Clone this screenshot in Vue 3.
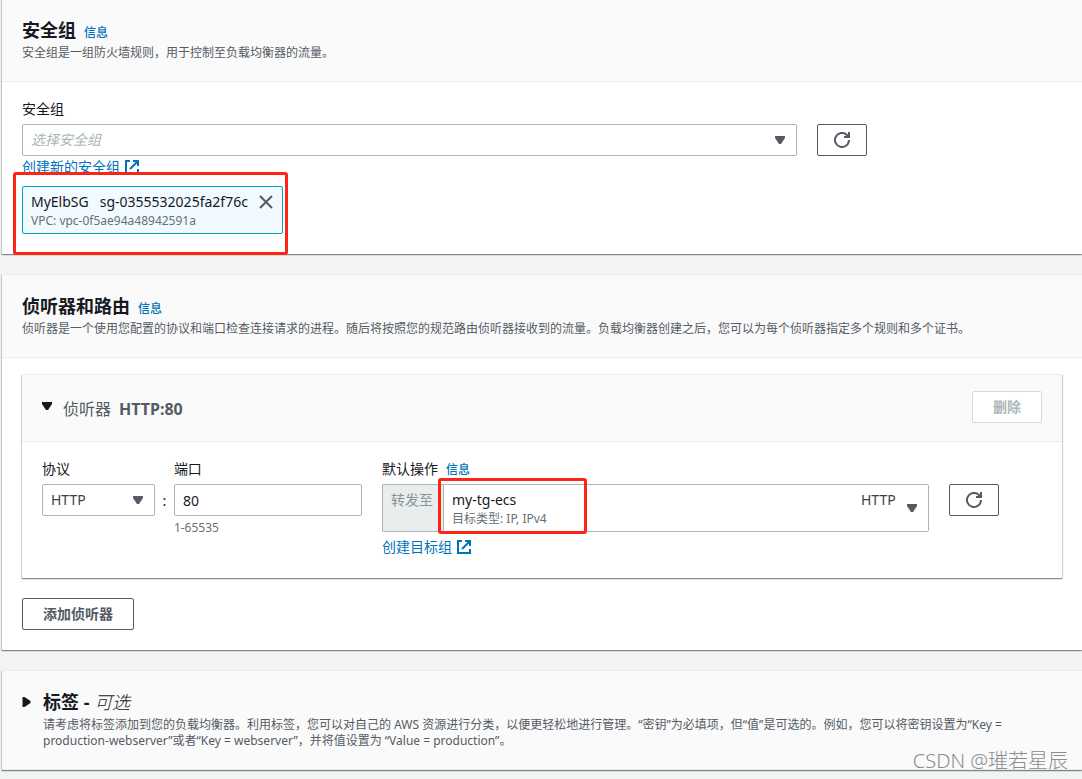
<script setup>
import { ref } from 'vue'

const securityGroup = ref('')
const selectedGroups = ref([
  { name: 'MyElbSG', id: 'sg-0355532025fa2f76c', vpc: 'vpc-0f5ae94a48942591a' },
])
const protocol = ref('HTTP')
const port = ref('80')

function removeGroup(id) {
  selectedGroups.value = selectedGroups.value.filter((group) => group.id !== id)
}
</script>

<template>
  <main class="page">
    <section class="panel panel-first">
      <header class="panel-header">
        <div class="title-row">
          <h2 class="title">安全组</h2>
          <a class="info" href="#">信息</a>
        </div>
        <p class="description">安全组是一组防火墙规则，用于控制至负载均衡器的流量。</p>
      </header>
      <div class="panel-body">
        <label class="label" for="security-group">安全组</label>
        <div class="group-row">
          <div class="select-box group-select">
            <select id="security-group" v-model="securityGroup" class="control placeholder">
              <option value="">选择安全组</option>
            </select>
            <svg class="caret" viewBox="0 0 10 8" aria-hidden="true"><path d="M0 0h10v2L6 8H4L0 2z" /></svg>
          </div>
          <button class="button refresh" type="button" aria-label="刷新">
            <svg viewBox="0 0 16 16" aria-hidden="true">
              <path d="M15 8A7 7 0 1 1 12.6 2.7L15 5" />
              <path d="M15 0v5h-5" />
            </svg>
          </button>
        </div>
        <a class="link" href="#">
          创建新的安全组
          <svg class="external" viewBox="0 0 14 14" aria-hidden="true">
            <path d="M5 1H1v12h12V9M8 1h5v5M13 1L5 9" />
          </svg>
        </a>
        <div v-for="group in selectedGroups" :key="group.id" class="token">
          <div>
            <div class="token-name"><span>{{ group.name }}</span><span>{{ group.id }}</span></div>
            <div class="secondary">VPC: {{ group.vpc }}</div>
          </div>
          <button class="dismiss" type="button" aria-label="移除" @click="removeGroup(group.id)">
            <svg viewBox="0 0 14 14" aria-hidden="true"><path d="M1 1l12 12M13 1L1 13" /></svg>
          </button>
          <span class="highlight highlight-token"></span>
        </div>
      </div>
    </section>

    <section class="panel">
      <header class="panel-header">
        <div class="title-row">
          <h2 class="title">侦听器和路由</h2>
          <a class="info" href="#">信息</a>
        </div>
        <p class="description">侦听器是一个使用您配置的协议和端口检查连接请求的进程。随后将按照您的规范路由侦听器接收到的流量。负载均衡器创建之后，您可以为每个侦听器指定多个规则和多个证书。</p>
      </header>
      <div class="panel-body">
        <div class="listener">
          <div class="listener-header">
            <button class="expander" type="button" aria-expanded="true">
              <svg class="caret-open" viewBox="0 0 10 8" aria-hidden="true"><path d="M0 0h10v2L6 8H4L0 2z" /></svg>
              <span>侦听器</span>
              <strong>HTTP:80</strong>
            </button>
            <button class="button" type="button" disabled>删除</button>
          </div>
          <div class="listener-body">
            <div class="endpoint">
              <div>
                <label class="label" for="protocol">协议</label>
                <div class="select-box">
                  <select id="protocol" v-model="protocol" class="control">
                    <option>HTTP</option>
                    <option>HTTPS</option>
                  </select>
                  <svg class="caret" viewBox="0 0 10 8" aria-hidden="true"><path d="M0 0h10v2L6 8H4L0 2z" /></svg>
                </div>
              </div>
              <span class="colon">:</span>
              <div>
                <label class="label" for="port">端口</label>
                <input id="port" v-model="port" class="control" type="text" aria-describedby="port-hint">
                <div id="port-hint" class="hint">1-65535</div>
              </div>
            </div>
            <div class="action">
              <div class="action-field">
                <div class="title-row">
                  <span id="action-label" class="label">默认操作</span>
                  <a class="info" href="#">信息</a>
                </div>
                <div class="forward">
                  <span class="prefix">转发至</span>
                  <button class="target" type="button" aria-haspopup="listbox" aria-labelledby="action-label target-name">
                    <span class="target-text">
                      <span id="target-name" class="target-name">my-tg-ecs</span>
                      <span class="secondary">目标类型: IP, IPv4</span>
                    </span>
                    <span class="target-protocol">HTTP</span>
                    <svg class="target-caret" viewBox="0 0 10 8" aria-hidden="true"><path d="M0 0h10v2L6 8H4L0 2z" /></svg>
                  </button>
                  <span class="highlight highlight-target"></span>
                </div>
                <a class="link link-spaced" href="#">
                  创建目标组
                  <svg class="external" viewBox="0 0 14 14" aria-hidden="true">
                    <path d="M5 1H1v12h12V9M8 1h5v5M13 1L5 9" />
                  </svg>
                </a>
              </div>
              <button class="button refresh action-refresh" type="button" aria-label="刷新">
                <svg viewBox="0 0 16 16" aria-hidden="true">
                  <path d="M15 8A7 7 0 1 1 12.6 2.7L15 5" />
                  <path d="M15 0v5h-5" />
                </svg>
              </button>
            </div>
          </div>
        </div>
        <button class="button add" type="button">添加侦听器</button>
      </div>
    </section>

    <section class="panel">
      <header class="panel-header tags">
        <svg class="caret-closed" viewBox="0 0 8 10" aria-hidden="true"><path d="M0 0h2l6 4v2l-6 4H0z" /></svg>
        <div>
          <h2 class="title"><button class="title-button" type="button" aria-expanded="false">标签 - <em>可选</em></button></h2>
          <p class="description">请考虑将标签添加到您的负载均衡器。利用标签，您可以对自己的 AWS 资源进行分类，以便更轻松地进行管理。“密钥”为必填项，但“值”是可选的。例如，您可以将密钥设置为“Key = production-webserver”或者“Key = webserver”，并将值设置为 “Value = production”。</p>
        </div>
      </header>
    </section>

    <div class="watermark">CSDN @璀若星辰</div>
  </main>
</template>

<style>
body {
  margin: 0;
  background: #f2f3f3;
}
</style>

<style scoped>
.page,
.page * {
  box-sizing: border-box;
}

.page {
  position: relative;
  display: flow-root;
  min-height: 100vh;
  padding-left: 2px;
  overflow: hidden;
  color: #16191f;
  font: 14px/22px "Noto Sans", "Noto Sans CJK SC", sans-serif;
}

button,
input,
select {
  margin: 0;
  font: inherit;
}

.panel {
  margin-bottom: 20px;
  background: #fff;
  border-top: 1px solid #eaeded;
  box-shadow: 0 1px 1px rgba(0, 28, 36, 0.3), 1px 1px 1px rgba(0, 28, 36, 0.15), -1px 1px 1px rgba(0, 28, 36, 0.15);
}

.panel:last-of-type {
  margin-bottom: 8px;
}

.panel-first {
  margin-top: -2px;
}

.panel-header {
  padding: 20px;
  background: #fafafa;
  border-bottom: 1px solid #eaeded;
}

.title-row {
  display: flex;
  align-items: baseline;
  gap: 8px;
}

.title {
  margin: 0;
  font-size: 18px;
  line-height: 22px;
  font-weight: 700;
}

.title em {
  font-weight: 300;
}

.info {
  color: #0073bb;
  font-size: 12px;
  line-height: 16px;
  font-weight: 500;
  text-decoration: none;
}

.description {
  margin: 4px 0 0;
  color: #545b64;
  font-size: 12px;
  line-height: 16px;
}

.panel-body {
  padding: 16px 20px 20px;
}

.label {
  display: block;
  margin-bottom: 4px;
}

.group-row {
  display: grid;
  grid-template-columns: repeat(4, minmax(0, 1fr));
  gap: 20px;
}

.group-select {
  grid-column: span 3;
}

.select-box {
  position: relative;
}

.control {
  display: block;
  width: 100%;
  height: 32px;
  padding: 0 8px;
  appearance: none;
  color: #16191f;
  background: #fff;
  border: 1px solid #aab7b8;
  border-radius: 2px;
}

select.control {
  color: #3c4148;
}

select.placeholder {
  color: #aab7b8;
  font-style: italic;
}

.caret {
  position: absolute;
  top: 12px;
  right: 12px;
  width: 10px;
  height: 8px;
  fill: #545b64;
  pointer-events: none;
}

.button {
  height: 32px;
  padding: 0 20px;
  color: #545b64;
  font-weight: 700;
  line-height: 22px;
  background: #fff;
  border: 1px solid #545b64;
  border-radius: 2px;
}

.button:disabled {
  color: #aab7b8;
  border-color: #d5dbdb;
}

.refresh {
  display: flex;
  align-items: center;
  justify-content: center;
  width: 50px;
  padding: 0;
}

.refresh svg {
  width: 16px;
  height: 16px;
  fill: none;
  stroke: #545b64;
  stroke-width: 2;
}

.link {
  display: flex;
  align-items: center;
  gap: 5px;
  width: max-content;
  color: #0073bb;
  text-decoration: none;
}

.link-spaced {
  margin-top: 4px;
}

.external {
  width: 14px;
  height: 14px;
  fill: none;
  stroke: #0073bb;
  stroke-width: 2;
}

.token {
  position: relative;
  display: flex;
  align-items: flex-start;
  gap: 11px;
  width: max-content;
  margin-top: 8px;
  padding: 4px 9px 4px 8px;
  background: #f1faff;
  border: 1px solid #00a1c9;
  border-radius: 2px;
}

.token-name {
  display: flex;
  gap: 11px;
}

.secondary {
  display: block;
  color: #687078;
  font-size: 12px;
  line-height: 16px;
}

.token .secondary {
  color: #687078;
}

.dismiss {
  display: flex;
  align-items: center;
  height: 22px;
  padding: 0;
  background: none;
  border: 0;
}

.dismiss svg {
  width: 14px;
  height: 14px;
  fill: none;
  stroke: #545b64;
  stroke-width: 2;
}

.highlight {
  position: absolute;
  border: 3px solid #fb2415;
  border-radius: 3px;
  pointer-events: none;
}

.highlight-token {
  inset: -15px -6px -22px -10px;
}

.highlight-target {
  top: -6px;
  left: 56px;
  width: 149px;
  height: 56px;
}

.listener {
  border-top: 1px solid #eaeded;
  box-shadow: 0 1px 1px rgba(0, 28, 36, 0.3), 1px 1px 1px rgba(0, 28, 36, 0.15), -1px 1px 1px rgba(0, 28, 36, 0.15);
}

.listener-header {
  display: flex;
  align-items: center;
  justify-content: space-between;
  padding: 16px 20px 18px;
  background: #fafafa;
  border-bottom: 1px solid #eaeded;
}

.expander {
  display: flex;
  align-items: baseline;
  gap: 8px;
  padding: 4px 0 0;
  color: #545b64;
  font-size: 16px;
  line-height: 22px;
  background: none;
  border: 0;
}

.caret-open {
  align-self: flex-start;
  width: 10px;
  height: 8px;
  margin: 4px 3px 0 0;
  fill: #16191f;
}

.listener-body {
  display: grid;
  grid-template-columns: repeat(12, minmax(0, 1fr));
  gap: 20px;
  padding: 16px 20px 20px;
}

.endpoint {
  display: grid;
  grid-column: span 4;
  grid-template-columns: 3fr 19px 5fr;
}

.colon {
  padding-top: 32px;
  text-align: center;
}

.hint {
  margin-top: 4px;
  color: #687078;
  font-size: 12px;
  line-height: 16px;
}

.action {
  display: grid;
  grid-column: span 8;
  grid-template-columns: repeat(6, minmax(0, 1fr));
  gap: 20px;
}

.action-field {
  grid-column: span 5;
}

.action-refresh {
  margin-top: 26px;
}

.forward {
  position: relative;
  display: flex;
}

.prefix {
  width: 61px;
  padding: 4px 8px;
  color: #879596;
  background: #eaeded;
  border: 1px solid #aab7b8;
  border-right: 0;
  border-radius: 2px 0 0 2px;
}

.target {
  display: flex;
  flex: 1;
  align-items: flex-start;
  padding: 4px 11px 4px 8px;
  color: #16191f;
  text-align: left;
  background: #fff;
  border: 1px solid #aab7b8;
  border-radius: 0 2px 2px 0;
}

.target-text {
  flex: 1;
}

.target-name {
  display: block;
}

.target-protocol {
  color: #3c4148;
}

.target-caret {
  align-self: center;
  width: 10px;
  height: 8px;
  margin-left: 11px;
  fill: #545b64;
}

.add {
  display: block;
  margin-top: 20px;
}

.tags {
  display: flex;
  gap: 12px;
}

.caret-closed {
  flex: none;
  width: 9px;
  height: 10px;
  margin-top: 6px;
  fill: #16191f;
}

.title-button {
  display: block;
  padding: 0;
  color: inherit;
  background: none;
  border: 0;
}

.watermark {
  position: absolute;
  right: 14px;
  bottom: 4px;
  color: #8a8d90;
  font-size: 20px;
  font-weight: 300;
  line-height: 28px;
  pointer-events: none;
}
</style>
